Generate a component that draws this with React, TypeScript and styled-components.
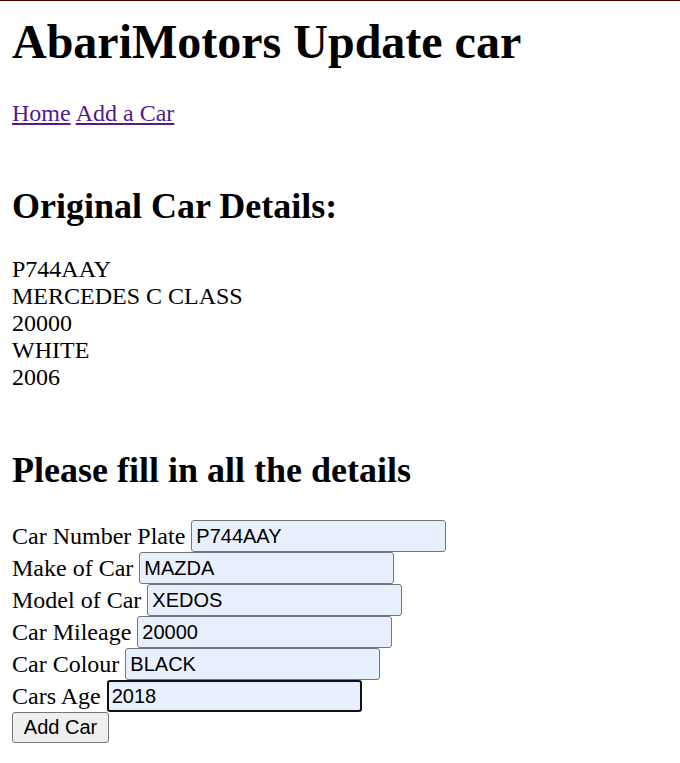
import React from "react";
import styled, { createGlobalStyle } from "styled-components";

const Global = createGlobalStyle`
  html, body { margin: 0; padding: 0; background: #ffffff; }
  body { font-family: "Liberation Serif", "Times New Roman", serif; color: #000; }
`;

const Page = styled.div`
  border-top: 1px solid #4a0303;
  padding: 0 12px;
  font-size: 24px;
  line-height: 27px;
`;

const Title = styled.h1`
  margin: 13px 0 0;
  font-size: 48px;
  line-height: 55.2px;
  font-weight: 700;
`;

const Nav = styled.nav`
  margin-top: 31px;
  display: flex;
  gap: 5px;
`;

const NavLink = styled.a`
  color: #551a8b;
  text-decoration: underline;
`;

const Heading = styled.h2<{ $top: number }>`
  margin: ${(p) => p.$top}px 0 0;
  font-size: 36px;
  line-height: 41.4px;
  font-weight: 700;
`;

const Details = styled.div`
  margin-top: 29px;
  display: flex;
  flex-direction: column;
`;

const Form = styled.form`
  margin-top: 28.6px;
  display: flex;
  flex-direction: column;
  align-items: flex-start;
`;

const Row = styled.div`
  display: flex;
  align-items: center;
  gap: 6px;
  height: 32px;
`;

const Label = styled.label`
  font-size: 24px;
  line-height: 27px;
  white-space: nowrap;
`;

const Input = styled.input<{ $focused?: boolean }>`
  box-sizing: border-box;
  width: 255px;
  height: 32px;
  margin: 0;
  padding: 0 ${(p) => (p.$focused ? 3 : 4)}px;
  border: ${(p) => (p.$focused ? "2px solid #101010" : "1px solid #767676")};
  border-radius: 3px;
  background: #e8f0fe;
  font-family: "Liberation Sans", Arial, sans-serif;
  font-size: 20px;
  color: #000;
  outline: none;
`;

const Button = styled.button`
  box-sizing: border-box;
  height: 31px;
  width: 97px;
  margin: 0;
  padding: 0;
  border: 1px solid #767676;
  border-radius: 3px;
  background: #efefef;
  font-family: "Liberation Sans", Arial, sans-serif;
  font-size: 20px;
  color: #000;
`;

const fields = [
  { label: "Car Number Plate", value: "P744AAY" },
  { label: "Make of Car", value: "MAZDA" },
  { label: "Model of Car", value: "XEDOS" },
  { label: "Car Mileage", value: "20000" },
  { label: "Car Colour", value: "BLACK" },
  { label: "Cars Age", value: "2018", focused: true },
];

const original = ["P744AAY", "MERCEDES C CLASS", "20000", "WHITE", "2006"];

export default function App() {
  return (
    <>
      <Global />
      <Page>
        <Title>AbariMotors Update car</Title>
        <Nav>
          <NavLink href="#">Home</NavLink>
          <NavLink href="#">Add a Car</NavLink>
        </Nav>
        <Heading $top={58.4}>Original Car Details:</Heading>
        <Details>
          {original.map((t) => (
            <span key={t}>{t}</span>
          ))}
        </Details>
        <Heading $top={59}>Please fill in all the details</Heading>
        <Form onSubmit={(e) => e.preventDefault()}>
          {fields.map((f) => (
            <Row key={f.label}>
              <Label>{f.label}</Label>
              <Input defaultValue={f.value} $focused={f.focused} />
            </Row>
          ))}
          <Button type="submit">Add Car</Button>
        </Form>
      </Page>
    </>
  );
}
